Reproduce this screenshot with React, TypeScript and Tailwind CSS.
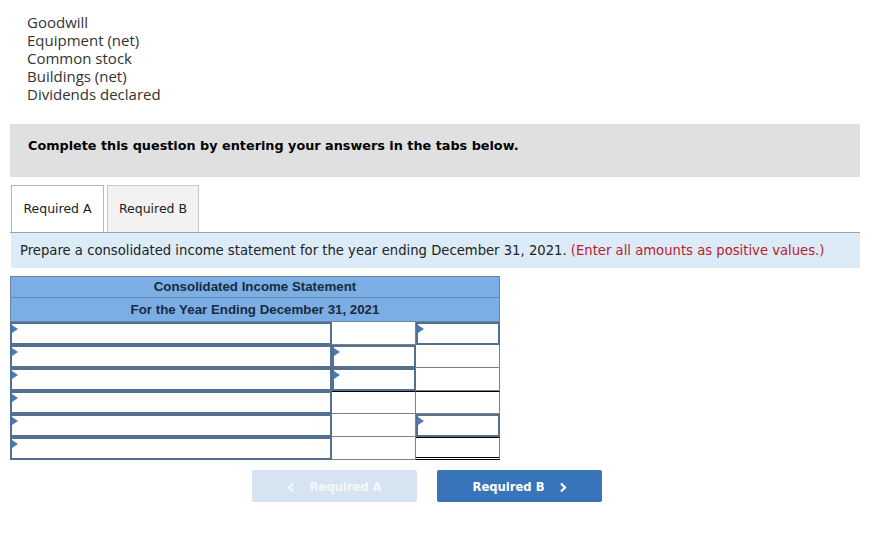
import React from "react";

type Kind = "in" | "plain";
interface CellDef {
  k: Kind;
  cls?: string;
}

const Tri = () => (
  <span className="absolute left-0 top-[1px] h-0 w-0 border-y-[4px] border-l-[6px] border-y-transparent border-l-[#4a7ab8]" />
);

function Cell({ d }: { d: CellDef }) {
  if (d.k === "in") {
    return (
      <div className={`relative h-[23px] border-2 border-[#52708f] bg-white ${d.cls ?? ""}`}>
        <Tri />
      </div>
    );
  }
  return <div className={`h-[23px] border-r border-b border-[#808080] bg-white ${d.cls ?? ""}`} />;
}

const rows: CellDef[][] = [
  [{ k: "in" }, { k: "plain" }, { k: "in" }],
  [{ k: "in" }, { k: "in" }, { k: "plain" }],
  [{ k: "in" }, { k: "in" }, { k: "plain" }],
  [{ k: "in" }, { k: "plain", cls: "border-t border-t-black" }, { k: "plain", cls: "border-t border-t-black" }],
  [{ k: "in" }, { k: "plain" }, { k: "in" }],
  [{ k: "in" }, { k: "plain" }, { k: "plain", cls: "border-t border-t-black border-b-[3px] border-b-black border-double" }],
];

const Chev = ({ dir, color }: { dir: "l" | "r"; color: string }) => (
  <svg width="8" height="11" viewBox="0 0 8 11" className="shrink-0">
    {dir === "l" ? (
      <path d="M6 1.5 L2 5.5 L6 9.5" fill="none" stroke={color} strokeWidth="2.2" strokeLinecap="butt" strokeLinejoin="miter" />
    ) : (
      <path d="M2 1.5 L6 5.5 L2 9.5" fill="none" stroke={color} strokeWidth="2.2" strokeLinecap="butt" strokeLinejoin="miter" />
    )}
  </svg>
);

export default function App() {
  const items = ["Goodwill", "Equipment (net)", "Common stock", "Buildings (net)", "Dividends declared"];
  return (
    <div className="min-h-[534px] w-[889px] bg-white pt-[13px]">
      <div className="pl-[27px] text-[15px] leading-[18px] text-[#333]" style={{ fontFamily: "'Open Sans', sans-serif" }}>
        {items.map((t) => (
          <div key={t}>{t}</div>
        ))}
      </div>

      <div className="mx-[10px] mt-[21px] w-[850px]" style={{ fontFamily: "'DejaVu Sans', Verdana, sans-serif" }}>
        <div className="h-[53px] bg-[#e0e0e0] pl-[18px] pt-[13px] text-[12.8px] leading-[18px] font-bold text-black">
          Complete this question by entering your answers in the tabs below.
        </div>

        <div className="mt-[8px] flex h-[48px] items-end border-b border-[#a0a0a0] pl-px">
          <div className="flex h-[47px] w-[93px] items-center justify-center border-x border-t border-[#b5b5b5] bg-white pt-px text-[12.5px] text-[#222]">
            Required A
          </div>
          <div className="ml-[3px] flex h-[47px] w-[92px] items-center justify-center border-x border-t border-[#c8c8c8] bg-[#f2f2f2] pt-px text-[12.5px] text-[#222]">
            Required B
          </div>
        </div>

        <div className="ml-px flex h-[35px] items-center bg-[#dcebf8] pl-[9px] text-[13.2px] text-[#222]">
          <span>
            Prepare a consolidated income statement for the year ending December 31, 2021.{" "}
            <span className="text-[#c0192b]">(Enter all amounts as positive values.)</span>
          </span>
        </div>
      </div>

      <div className="ml-[10px] mt-[8px] w-[490px]" style={{ fontFamily: "'Liberation Sans', Arial, sans-serif" }}>
        <div className="border border-[#6b86a3] bg-[#7aaee5]">
          <div className="flex h-[21px] items-center justify-center border-b border-[#6b86a3] text-[13.3px] font-bold text-[#1b2a3c]">
            Consolidated Income Statement
          </div>
          <div className="flex h-[23px] items-center justify-center text-[13.3px] font-bold text-[#1b2a3c]">
            For the Year Ending December 31, 2021
          </div>
        </div>
        <div className="grid grid-cols-[322px_84px_84px]">
          {rows.map((r, i) => (
            <React.Fragment key={i}>
              {r.map((c, j) => (
                <Cell key={j} d={c} />
              ))}
            </React.Fragment>
          ))}
        </div>
      </div>

      <div className="mt-[10px] flex gap-[20px] pl-[252px]" style={{ fontFamily: "'DejaVu Sans', Verdana, sans-serif" }}>
        <div className="flex h-[32px] w-[165px] items-center justify-center gap-[14px] rounded-[2px] bg-[#d6e3f1] pt-[3px] text-[11.6px] font-bold text-[#f4f7fb]">
          <Chev dir="l" color="#f4f7fb" />
          <span>Required A</span>
        </div>
        <div className="flex h-[32px] w-[165px] items-center justify-center gap-[14px] rounded-[2px] bg-[#3874b9] pt-[3px] text-[11.6px] font-bold text-white">
          <span>Required B</span>
          <Chev dir="r" color="#ffffff" />
        </div>
      </div>
    </div>
  );
}
